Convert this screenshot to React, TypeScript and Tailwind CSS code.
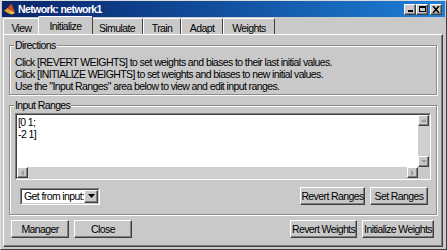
import React from "react";

const raised =
  "border border-t-white border-l-white border-r-[#404040] border-b-[#404040] shadow-[inset_-1px_-1px_0_#808080]";

function Button({ label, w }: { label: string; w: string }) {
  return (
    <div className={`${raised} ${w} h-[18px] bg-[#c9c9c9] flex items-center justify-center leading-none whitespace-nowrap`}>
      {label}
    </div>
  );
}

function Arrow({ dir }: { dir: "up" | "down" | "left" | "right" }) {
  const pts = {
    up: "1,5 4,2 7,5",
    down: "1,2 4,5 7,2",
    left: "5,1 2,4 5,7",
    right: "2,1 5,4 2,7",
  }[dir];
  return (
    <div className={`${raised} w-[11px] h-[11px] bg-[#c9c9c9] flex items-center justify-center`}>
      <svg width="8" height="8" viewBox="0 0 8 8">
        <polygon points={pts} fill="#9a9a9a" />
      </svg>
    </div>
  );
}

function Group({ title, children, className }: { title: string; children: React.ReactNode; className: string }) {
  return (
    <div className={`relative ${className}`}>
      <div className="absolute inset-x-0 top-[6px] bottom-0 border border-[#8a8a8a] shadow-[1px_1px_0_white,inset_1px_1px_0_white]" />
      <div className="absolute left-[5px] top-0 px-[1px] bg-[#c9c9c9] leading-[12px]">{title}</div>
      <div className="relative h-full">{children}</div>
    </div>
  );
}

function Tab({ label, w, active }: { label: string; w: string; active?: boolean }) {
  if (active) {
    return (
      <div className={`${w} h-[18px] -mx-[2px] relative z-10 bg-[#c9c9c9] border-t border-l border-r border-t-white border-l-white border-r-[#404040] rounded-t-[2px] flex items-start justify-center pt-[2px]`}>
        {label}
      </div>
    );
  }
  return (
    <div className={`${w} h-[16px] bg-[#c9c9c9] border-t border-l border-r border-t-white border-l-white border-r-[#404040] rounded-t-[2px] flex items-start justify-center pt-[2px]`}>
      {label}
    </div>
  );
}

export default function App() {
  return (
    <div className="w-[447px] h-[250px] bg-[#c9c9c9] border border-t-[#dcdcdc] border-l-[#dcdcdc] border-r-[#404040] border-b-[#404040] flex flex-col font-['Liberation_Sans',Arial,sans-serif] text-[10.5px] tracking-[-0.6px] text-black overflow-hidden">
      <div className="h-[16px] mx-[1px] bg-gradient-to-r from-[#0a246a] to-[#1e7fd8] flex items-center pl-[2px] pr-[3px] shrink-0">
        <svg width="12" height="12" viewBox="0 0 13 12" className="mr-[2px]">
          <polygon points="0,8 4,5 7,7 5,11" fill="#e8a020" />
          <polygon points="4,5 8,0 12,10 7,7" fill="#d84818" />
          <polygon points="7,7 12,10 9,12 5,11" fill="#f0c040" />
        </svg>
        <span className="text-white font-bold text-[10.5px] tracking-[-0.6px] leading-none">Network: network1</span>
        <div className="ml-auto flex items-center">
          <div className={`${raised} w-[12px] h-[11px] bg-[#c9c9c9] flex items-end justify-center pb-[2px]`}>
            <div className="w-[5px] h-[2px] bg-black" />
          </div>
          <div className={`${raised} w-[12px] h-[11px] bg-[#c9c9c9] flex items-center justify-center`}>
            <div className="w-[7px] h-[6px] border border-black border-t-2" />
          </div>
          <div className={`${raised} w-[12px] h-[11px] bg-[#c9c9c9] flex items-center justify-center ml-[2px]`}>
            <svg width="8" height="7" viewBox="0 0 8 7">
              <path d="M1 0 L7 7 M7 0 L1 7" stroke="black" strokeWidth="1.6" />
            </svg>
          </div>
        </div>
      </div>

      <div className="flex items-end h-[17px] pl-[2px] shrink-0">
        <Tab label="View" w="w-[37px]" />
        <Tab label="Initialize" w="w-[55px]" active />
        <Tab label="Simulate" w="w-[52px]" />
        <Tab label="Train" w="w-[38px]" />
        <Tab label="Adapt" w="w-[42px]" />
        <Tab label="Weights" w="w-[52px]" />
      </div>

      <div className="ml-[2px] mr-[3px] mb-[2px] flex-1 border border-t-white border-l-white border-r-[#404040] border-b-[#404040] shadow-[inset_-1px_-1px_0_#808080] px-[4px] pt-[4px] flex flex-col">
        <Group title="Directions" className="h-[56px] mx-px">
          <div className="pt-[17px] pl-[6px] leading-[12px]">
            <div>Click [REVERT WEIGHTS] to set weights and biases to their last initial values.</div>
            <div>Click [INITIALIZE WEIGHTS] to set weights and biases to new initial values.</div>
            <div>Use the "Input Ranges" area below to view and edit input ranges.</div>
          </div>
        </Group>

        <Group title="Input Ranges" className="h-[116px] mt-[4px] mx-px">
          <div className="pt-[14px] px-[6px] flex flex-col">
            <div className="h-[67px] border border-t-[#808080] border-l-[#808080] border-r-white border-b-white">
              <div className="h-full border border-t-[#404040] border-l-[#404040] border-r-[#c9c9c9] border-b-[#c9c9c9] flex flex-col">
                <div className="flex flex-1 min-h-0">
                  <div className="flex-1 bg-white pl-[1px] pt-[1px] leading-[12px] whitespace-pre">{"[0 1;\n-2 1]"}</div>
                  <div className="w-[11px] flex flex-col bg-[#c9c9c9]">
                    <Arrow dir="up" />
                    <div className="flex-1 bg-[#cfcfcf]" />
                    <Arrow dir="down" />
                  </div>
                </div>
                <div className="flex h-[11px] bg-[#cfcfcf]">
                  <Arrow dir="left" />
                  <div className="flex-1" />
                  <Arrow dir="right" />
                  <div className="w-[11px] bg-[#c9c9c9]" />
                </div>
              </div>
            </div>
            <div className="flex items-center mt-[7px] pl-[5px] pr-[3px]">
              <div className="w-[80px] h-[17px] border border-t-[#808080] border-l-[#808080] border-r-white border-b-white">
                <div className="h-full border border-t-[#404040] border-l-[#404040] border-r-[#c9c9c9] border-b-[#c9c9c9] bg-white flex items-center">
                  <span className="flex-1 pl-[2px] leading-none whitespace-nowrap">Get from input:</span>
                  <div className={`${raised} w-[14px] h-full bg-[#c9c9c9] flex items-center justify-center`}>
                    <svg width="7" height="4" viewBox="0 0 7 4">
                      <polygon points="0,0 7,0 3.5,4" fill="black" />
                    </svg>
                  </div>
                </div>
              </div>
              <div className="ml-auto flex gap-[5px]">
                <Button label="Revert Ranges" w="w-[65px]" />
                <Button label="Set Ranges" w="w-[58px]" />
              </div>
            </div>
          </div>
        </Group>

        <div className="flex items-center mt-[5px] px-[3px]">
          <Button label="Manager" w="w-[58px]" />
          <div className="ml-[5px]">
            <Button label="Close" w="w-[58px]" />
          </div>
          <div className="ml-auto flex gap-[5px] mr-[1px]">
            <Button label="Revert Weights" w="w-[67px]" />
            <Button label="Initialize Weights" w="w-[72px]" />
          </div>
        </div>
      </div>
    </div>
  );
}
